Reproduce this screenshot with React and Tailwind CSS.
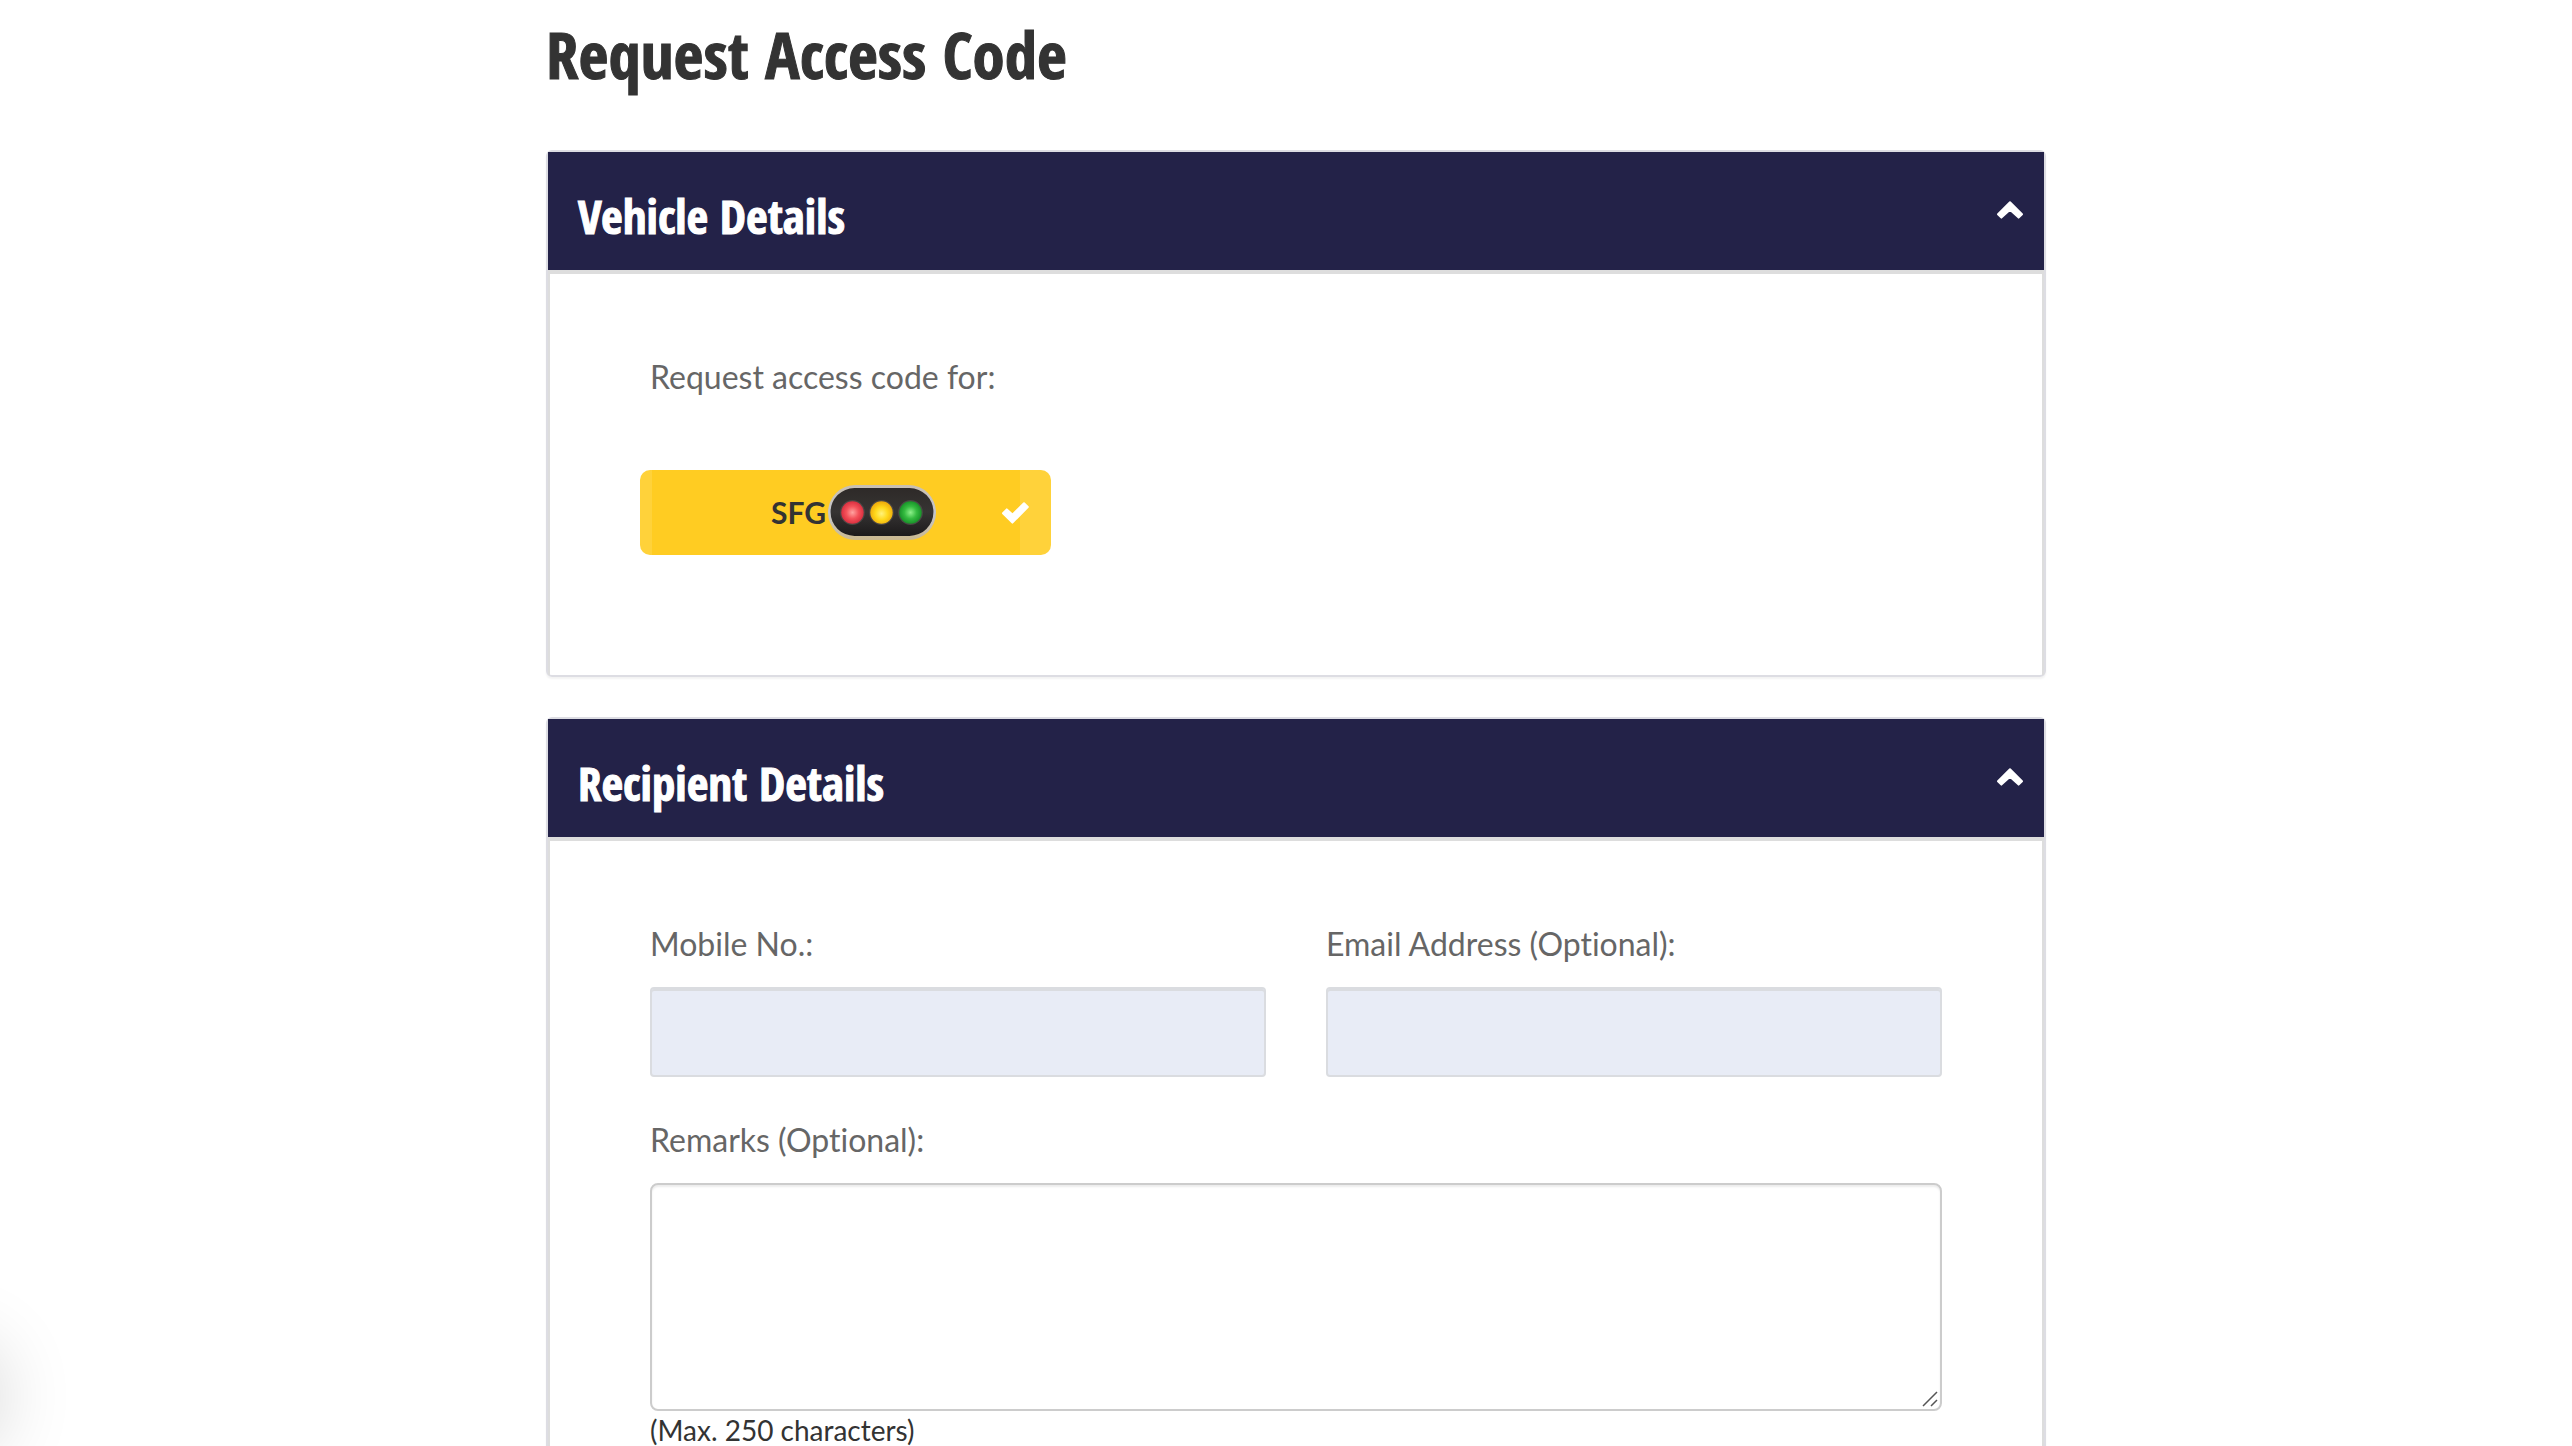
import React, { useState } from 'react';

const ChevronUp = ({ className }) => (
    <svg viewBox="0 0 26 18" className={className} fill="currentColor" stroke="currentColor" strokeWidth="2" strokeLinejoin="round" aria-hidden="true">
        <path d="M13 1.2 25 13.2 21.6 16.6 13 8.8 4.4 16.6 1 13.2Z" />
    </svg>
);

const CheckMark = ({ className }) => (
    <svg viewBox="0 0 27 22" className={className} fill="currentColor" stroke="currentColor" strokeWidth="2" strokeLinejoin="round" aria-hidden="true">
        <path d="M1 11.2 4.8 7.4 10.4 12.6 22 1.2 25.8 5 10.4 20.6Z" />
    </svg>
);

const TrafficLight = ({ className }) => (
    <svg viewBox="0 0 106 54" className={className} aria-hidden="true">
        <defs>
            <linearGradient id="rim" x1="0" y1="0" x2="0" y2="1">
                <stop offset="0" stopColor="#c9bfb0" />
                <stop offset="0.5" stopColor="#c4c6cd" />
                <stop offset="1" stopColor="#cbb98f" />
            </linearGradient>
            <linearGradient id="body" x1="0" y1="0" x2="0" y2="1">
                <stop offset="0" stopColor="#2e2a28" />
                <stop offset="0.5" stopColor="#363433" />
                <stop offset="1" stopColor="#1c1a1b" />
            </linearGradient>
            <radialGradient id="red" cx="0.5" cy="0.5" r="0.55">
                <stop offset="0" stopColor="#ffa3a0" />
                <stop offset="0.5" stopColor="#f4525a" />
                <stop offset="1" stopColor="#d4283a" />
            </radialGradient>
            <radialGradient id="amber" cx="0.5" cy="0.55" r="0.55">
                <stop offset="0" stopColor="#fff27a" />
                <stop offset="0.5" stopColor="#ffd91c" />
                <stop offset="1" stopColor="#eda80a" />
            </radialGradient>
            <radialGradient id="green" cx="0.5" cy="0.5" r="0.55">
                <stop offset="0" stopColor="#8df08a" />
                <stop offset="0.5" stopColor="#35bb40" />
                <stop offset="1" stopColor="#128a24" />
            </radialGradient>
        </defs>
        <rect x="0" y="0" width="106" height="54" rx="27" fill="url(#rim)" />
        <rect x="2.5" y="3" width="101" height="47" rx="23.5" fill="url(#body)" />
        <circle cx="24" cy="27" r="12.2" fill="#4a4644" />
        <circle cx="52.5" cy="27" r="12.2" fill="#4a4644" />
        <circle cx="81" cy="27" r="12.2" fill="#4a4644" />
        <circle cx="24" cy="27" r="11" fill="url(#red)" />
        <circle cx="52.5" cy="27" r="11" fill="url(#amber)" />
        <circle cx="81" cy="27" r="11" fill="url(#green)" />
    </svg>
);

const Panel = ({ title, children }) => {
    const [open, setOpen] = useState(true);

    return (
        <section className="mb-10 rounded-md border-2 border-[#dddde3] shadow-[0_2px_2px_rgba(0,0,0,0.05)]">
            <h2>
                <button
                    type="button"
                    aria-expanded={open}
                    onClick={() => setOpen(!open)}
                    className="flex w-full items-center justify-between bg-[#232248] pt-[34px] pr-[21px] pb-6 pl-[30px] text-white"
                >
                    <span className='font-["Open_Sans_Condensed","Open_Sans",sans-serif] text-[47px] leading-[60px] font-extrabold [-webkit-text-stroke:1px]'>
                        {title}
                    </span>
                    <ChevronUp className={`mb-3 h-[18px] w-[26px] ${open ? '' : 'rotate-180'}`} />
                </button>
            </h2>
            {open && <div className="border-x-2 border-t-4 border-[#ddd] px-[100px] pt-[83px] pb-[120px]">{children}</div>}
        </section>
    );
};

const Field = ({ id, label, type }) => (
    <div>
        <label htmlFor={id} className="mb-[23px] block text-[32px] leading-10 text-[#666]">{label}</label>
        <input
            id={id}
            type={type}
            className="block h-[90px] w-full rounded border-2 border-[#dadce0] bg-[#e8ecf6] px-6 text-[32px] text-[#333] shadow-[inset_0_2px_0_#dadce0] outline-none"
        />
    </div>
);

const App = () => {
    const [selected, setSelected] = useState(true);

    return (
        <div className='relative h-screen overflow-hidden bg-white font-["Lato",sans-serif] text-[#333] [font-variant-ligatures:none]'>
            <main className="mx-auto w-full max-w-[1520px] pl-5">
                <h1 className='mb-14 pt-3.5 font-["Open_Sans_Condensed","Open_Sans",sans-serif] text-[65px] leading-[80px] font-extrabold [-webkit-text-stroke:1px]'>
                    Request Access Code
                </h1>

                <Panel title="Vehicle Details">
                    <p className="mb-[73px] text-[32px] leading-10 text-[#666]">Request access code for:</p>
                    <button
                        type="button"
                        aria-pressed={selected}
                        onClick={() => setSelected(!selected)}
                        className="relative -ml-2.5 flex h-[85px] w-[411px] items-center justify-center rounded-[10px] bg-[linear-gradient(to_right,#ffd23a_12px,#ffcc22_12px,#ffcc22_calc(100%-31px),#ffd23a_calc(100%-31px))] pl-4 text-[30px] font-bold"
                    >
                        SFG
                        <TrafficLight className="ml-0.5 h-[55px] w-[108px]" />
                        {selected && <CheckMark className="absolute right-[22px] h-[22px] w-[27px] text-white" />}
                    </button>
                </Panel>

                <Panel title="Recipient Details">
                    <div className="grid grid-cols-2 gap-[60px]">
                        <Field id="mobile" label="Mobile No.:" type="tel" />
                        <Field id="email" label="Email Address (Optional):" type="email" />
                    </div>
                    <div className="mt-[43px]">
                        <label htmlFor="remarks" className="mb-[23px] block text-[32px] leading-10 text-[#666]">Remarks (Optional):</label>
                        <div className="relative">
                            <textarea
                                id="remarks"
                                maxLength={250}
                                className="block h-[228px] w-full resize-none rounded-lg border-2 border-[#ccc] px-6 py-3 text-[32px] shadow-[inset_0_2px_2px_rgba(0,0,0,0.08)] outline-none"
                            />
                            <svg viewBox="0 0 16 16" className="pointer-events-none absolute right-1 bottom-1 size-4" fill="none" stroke="#555" strokeWidth="1.5" aria-hidden="true">
                                <path d="M1 15 15 1M9 15 15 9" />
                            </svg>
                        </div>
                        <p className="mt-1 text-[28px] leading-[30px]">(Max. 250 characters)</p>
                    </div>
                </Panel>
            </main>

            {/* Launcher docked off the left edge, only its shadow shows */}
            <div className="absolute bottom-0 -left-[102px] size-[100px] rounded-full shadow-[0_0_80px_rgba(0,0,0,0.2)]" />
        </div>
    );
};

export default App;
